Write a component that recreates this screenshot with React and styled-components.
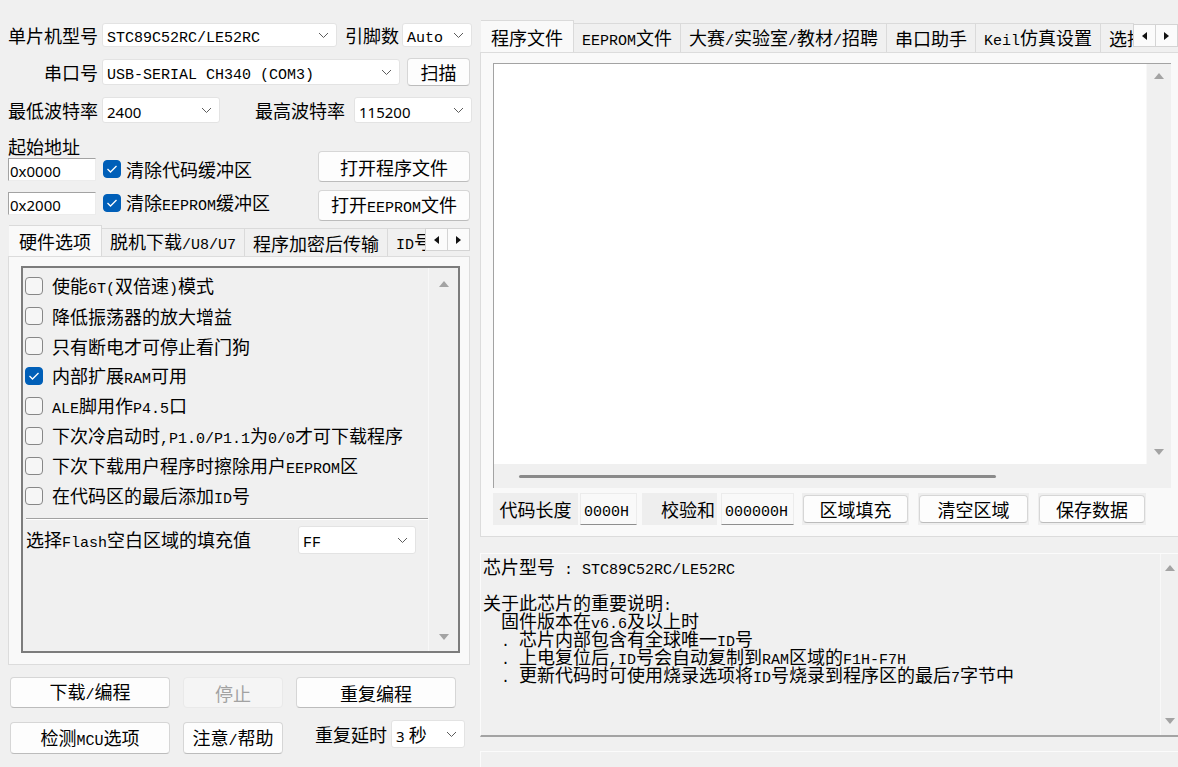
import React from 'react';
import styled, { createGlobalStyle, css } from 'styled-components';

const GlobalStyle = createGlobalStyle`
  html, body {
    margin: 0;
    padding: 0;
    background: #f0f0f0;
  }
  body {
    font-family: "Noto Sans CJK SC", "Noto Sans", sans-serif;
    font-size: 18px;
    color: #000;
  }
`;

// latin runs inside CJK labels are drawn in the narrow bitmap-like face
const Latin = styled.span`
  font-family: "Liberation Mono", "Noto Sans CJK SC", monospace;
  font-size: 15px;
`;

const Sans = styled.span`
  font-family: "Noto Sans", sans-serif;
  font-size: 15px;
`;

// one span, so a flex parent sees a single item and the runs share a baseline
const Mixed = ({ text }) => (
  <span>
    {text.split(/([ -~]+)/).map((part, i) => (i % 2 ? <Latin key={i}>{part}</Latin> : part))}
  </span>
);

const Window = styled.div`
  display: flex;
  width: 1178px;
  height: 767px;
  overflow: hidden;
  background: #f0f0f0;
`;

/* ---------- shared controls ---------- */

const Row = styled.div`
  display: flex;
  align-items: center;
  height: ${({ $h }) => $h}px;
  margin-top: ${({ $mt }) => $mt || 0}px;
`;

const Label = styled.div`
  flex: none;
  width: ${({ $w }) => $w}px;
  margin-left: ${({ $ml }) => $ml || 0}px;
  line-height: 1;
  white-space: nowrap;
  text-align: ${({ $right }) => ($right ? 'right' : 'left')};
  padding-right: ${({ $right }) => ($right ? 4 : 0)}px;
  box-sizing: border-box;
`;

const SelectBox = styled.div`
  flex: none;
  display: flex;
  align-items: center;
  justify-content: space-between;
  width: ${({ $w }) => $w}px;
  height: ${({ $h }) => $h || 24}px;
  box-sizing: border-box;
  padding: 0 7px 0 4px;
  background: #fff;
  border: 1px solid #e3e3e3;
  border-radius: 3px;
  line-height: 1;
  white-space: nowrap;
`;

const Chevron = () => (
  <svg width="11" height="7" viewBox="0 0 11 7">
    <polyline points="1,1 5.5,5.5 10,1" fill="none" stroke="#5c5c5c" strokeWidth="1" />
  </svg>
);

const Select = ({ w, h, children }) => (
  <SelectBox $w={w} $h={h}>
    <span>{children}</span>
    <Chevron />
  </SelectBox>
);

const Button = styled.div`
  flex: none;
  display: flex;
  align-items: center;
  justify-content: center;
  width: ${({ $w }) => ($w ? `${$w}px` : 'auto')};
  height: ${({ $h }) => ($h ? `${$h}px` : 'auto')};
  margin-left: ${({ $ml }) => $ml || 0}px;
  box-sizing: border-box;
  background: #fdfdfd;
  border: 1px solid #d6d6d6;
  border-bottom-color: #bcbcbc;
  border-radius: 4px;
  line-height: 1;
  white-space: nowrap;

  ${({ $disabled }) =>
    $disabled &&
    css`
      background: #f5f5f5;
      border-color: #e9e9e9;
      color: #a2a2a2;
    `}
`;

const CheckBox = styled.span`
  flex: none;
  display: inline-flex;
  align-items: center;
  justify-content: center;
  width: 18px;
  height: 18px;
  box-sizing: border-box;
  border-radius: 4px;
  ${({ $checked }) =>
    $checked
      ? css`
          background: #005fb8;
          border: 1px solid #005fb8;
        `
      : css`
          background: #f6f6f6;
          border: 1px solid #878787;
        `}
`;

const Check = ({ checked }) => (
  <CheckBox $checked={checked}>
    {checked && (
      <svg width="12" height="10" viewBox="0 0 12 10">
        <polyline points="1.5,5 4.5,8 10.5,2" fill="none" stroke="#fff" strokeWidth="1.3" />
      </svg>
    )}
  </CheckBox>
);

const ScrollArrow = ({ down }) => (
  <svg width="12" height="8" viewBox="0 0 12 8">
    <path d={down ? 'M1 1 H11 L6 7 Z' : 'M1 7 H11 L6 1 Z'} fill="#a3a3a3" />
  </svg>
);

/* ---------- tabs ---------- */

const TabStrip = styled.div`
  display: flex;
  align-items: flex-end;
  height: ${({ $h }) => $h}px;
  margin-left: 1px;
`;

const TabList = styled.div`
  flex: 1;
  min-width: 0;
  display: flex;
  align-items: flex-end;
  height: 100%;
  overflow: hidden;
`;

const Tab = styled.div`
  flex: none;
  display: flex;
  align-items: center;
  height: ${({ $active, $h }) => ($active ? $h : $h - 3)}px;
  box-sizing: border-box;
  padding: 0 ${({ $active }) => ($active ? 10 : 8)}px;
  margin-left: -1px;
  border: 1px solid #dadada;
  border-bottom: none;
  background: ${({ $active }) => ($active ? '#f9f9f9' : '#f0f0f0')};
  line-height: 1;
  white-space: nowrap;

  :first-child {
    margin-left: 0;
  }
`;

const TabArrows = styled.div`
  flex: none;
  display: flex;
  align-self: flex-start;
  margin-top: ${({ $mt }) => $mt}px;
`;

const TabArrow = styled.div`
  display: flex;
  align-items: center;
  justify-content: center;
  width: ${({ $s }) => $s}px;
  height: ${({ $s }) => $s}px;
  box-sizing: border-box;
  background: #fbfbfb;
  border: 1px solid #d4d4d4;
  margin-left: -1px;
`;

const ArrowPair = ({ size, mt }) => (
  <TabArrows $mt={mt}>
    <TabArrow $s={size}>
      <svg width="5" height="8" viewBox="0 0 5 8">
        <path d="M5 0 V8 L0 4 Z" fill="#111" />
      </svg>
    </TabArrow>
    <TabArrow $s={size}>
      <svg width="5" height="8" viewBox="0 0 5 8">
        <path d="M0 0 V8 L5 4 Z" fill="#111" />
      </svg>
    </TabArrow>
  </TabArrows>
);

/* ---------- left pane ---------- */

const LeftPane = styled.div`
  flex: none;
  width: 478px;
  box-sizing: border-box;
  padding: 23px 6px 0 8px;
  display: flex;
  flex-direction: column;
`;

const AddrSection = styled.div`
  display: flex;
  justify-content: space-between;
  margin-top: 13px;
`;

const AddrColumn = styled.div`
  display: flex;
  flex-direction: column;
`;

const SmallLabel = styled.div`
  height: 20px;
  line-height: 20px;
`;

const AddrRow = styled.div`
  display: flex;
  align-items: center;
  height: 26px;
  margin-top: ${({ $mt }) => $mt || 0}px;
`;

const AddrInput = styled.div`
  flex: none;
  width: 88px;
  height: 23px;
  box-sizing: border-box;
  margin-right: 7px;
  padding-left: 1px;
  background: #fff;
  border-top: 1px solid #a3a3a3;
  border-left: 1px solid #a3a3a3;
  border-right: 1px solid #ececec;
  border-bottom: 1px solid #ececec;
  line-height: 21px;
`;

const CheckText = styled.span`
  margin-left: ${({ $ml }) => $ml || 5}px;
  line-height: 1;
  white-space: nowrap;
`;

const ButtonColumn = styled.div`
  display: flex;
  flex-direction: column;
  gap: 8px;
  padding-top: 15px;
  margin-right: 2px;
`;

const LeftTabs = styled.div`
  margin-top: 4px;
  width: 462px;
`;

const OptionsPanel = styled.div`
  height: 409px;
  box-sizing: border-box;
  padding: 9px 9px 11px 12px;
  background: #f9f9f9;
  border: 1px solid #dcdcdc;
  display: flex;
`;

const ListBox = styled.div`
  flex: 1;
  display: grid;
  grid-template-columns: 1fr 30px;
  border: 2px solid #7c7c7c;
  background: #f0f0f0;
`;

const ListContent = styled.div`
  padding: 3px 0 0 2px;
`;

const OptionRow = styled.div`
  display: flex;
  align-items: center;
  height: 30px;
`;

const Separator = styled.div`
  margin: 7px 0 0 1px;
  border-top: 1px solid #a2a2a2;
  border-bottom: 1px solid #fff;
`;

const FillRow = styled.div`
  display: flex;
  align-items: center;
  height: 40px;
  padding-left: 1px;
`;

const VScroll = styled.div`
  display: flex;
  flex-direction: column;
  justify-content: space-between;
  align-items: center;
  padding: ${({ $pad }) => $pad};
  border-left: 1px solid #f8f8f8;
  background: #f0f0f0;
`;

const ActionGrid = styled.div`
  display: grid;
  grid-template-columns: 160px 100px 170px;
  grid-template-rows: 31px 32px;
  column-gap: 13px;
  row-gap: 14px;
  margin: 12px 0 0 2px;
`;

const DelayCell = styled.div`
  display: flex;
  align-items: center;
  gap: 4px;
  height: 28px;
  margin-top: -2px;
  padding-left: 19px;
  line-height: 1;
  white-space: nowrap;
`;

/* ---------- right pane ---------- */

const RightPane = styled.div`
  flex: 1;
  min-width: 0;
  display: flex;
  flex-direction: column;
  padding: 20px 0 0 2px;
`;

const FilePanel = styled.div`
  height: 485px;
  box-sizing: border-box;
  margin-right: -4px;
  padding: 10px 0 0 12px;
  background: #f9f9f9;
  border: 1px solid #dcdcdc;
`;

const Editor = styled.div`
  width: 678px;
  height: 425px;
  box-sizing: border-box;
  display: grid;
  grid-template-columns: 1fr 25px;
  grid-template-rows: 1fr 24px;
  border-top: 1px solid #a3a3a3;
  border-left: 1px solid #a3a3a3;
  background: #f0f0f0;
`;

const EditorText = styled.div`
  background: #fff;
`;

const HScroll = styled.div`
  display: flex;
  align-items: center;
  padding-left: 25px;
`;

const HThumb = styled.div`
  width: 477px;
  height: 3px;
  border-radius: 2px;
  background: #8a8a8a;
`;

const CodeRow = styled.div`
  display: flex;
  height: 32px;
  margin-top: 5px;
`;

const InfoCell = styled.div`
  flex: none;
  display: flex;
  align-items: center;
  justify-content: ${({ $align }) => $align || 'center'};
  width: ${({ $w }) => $w}px;
  margin-left: ${({ $ml }) => $ml || 0}px;
  box-sizing: border-box;
  padding: 0 2px;
  background: #eeeeee;
  line-height: 1;
  white-space: nowrap;
`;

const ValueField = styled.div`
  flex: none;
  display: flex;
  align-items: center;
  width: ${({ $w }) => $w}px;
  margin-left: ${({ $ml }) => $ml || 0}px;
  box-sizing: border-box;
  padding-left: 3px;
  background: #f9f9f9;
  border: 1px solid #ececec;
  border-bottom: 1px solid #8e8e8e;
  line-height: 1;
`;

const ButtonCell = styled.div`
  flex: none;
  display: flex;
  width: ${({ $w }) => $w}px;
  margin-left: ${({ $ml }) => $ml || 0}px;
  box-sizing: border-box;
  padding: 2px 1px;
  background: #eeeeee;

  & > * {
    flex: 1;
  }
`;

const InfoBox = styled.div`
  margin-top: 16px;
  height: 184px;
  box-sizing: border-box;
  display: grid;
  grid-template-columns: 1fr 18px;
  border-top: 1px solid #fbfbfb;
  border-left: 1px solid #fbfbfb;
  border-bottom: 2px solid #a3a3a3;
`;

const InfoText = styled.div`
  padding: 3px 0 0 2px;
`;

const InfoLine = styled.div`
  height: 18px;
  line-height: 18px;
  white-space: pre;
`;

const LowerBox = styled.div`
  flex: 1;
  margin-top: 14px;
  border-top: 1px solid #fbfbfb;
  border-left: 1px solid #fbfbfb;
`;

const options = [
  { text: '使能6T(双倍速)模式' },
  { text: '降低振荡器的放大增益' },
  { text: '只有断电才可停止看门狗' },
  { text: '内部扩展RAM可用', checked: true },
  { text: 'ALE脚用作P4.5口' },
  { text: '下次冷启动时,P1.0/P1.1为0/0才可下载程序' },
  { text: '下次下载用户程序时擦除用户EEPROM区' },
  { text: '在代码区的最后添加ID号' },
];

const infoLines = [
  '芯片型号 : STC89C52RC/LE52RC',
  '',
  '关于此芯片的重要说明:',
  '  固件版本在v6.6及以上时',
  '  . 芯片内部包含有全球唯一ID号',
  '  . 上电复位后,ID号会自动复制到RAM区域的F1H-F7H',
  '  . 更新代码时可使用烧录选项将ID号烧录到程序区的最后7字节中',
];

const leftTabs = ['硬件选项', '脱机下载/U8/U7', '程序加密后传输', 'ID号设置'];
const rightTabs = ['程序文件', 'EEPROM文件', '大赛/实验室/教材/招聘', '串口助手', 'Keil仿真设置', '选择型号'];

export default function App() {
  return (
    <>
      <GlobalStyle />
      <Window>
        <LeftPane>
          <Row $h={24}>
            <Label $w={94}>单片机型号</Label>
            <Select w={235}>
              <Mixed text="STC89C52RC/LE52RC" />
            </Select>
            <Label $w={57} $ml={8}>
              引脚数
            </Label>
            <Select w={70}>
              <Mixed text="Auto" />
            </Select>
          </Row>
          <Row $h={28} $mt={11}>
            <Label $w={94} $right>
              串口号
            </Label>
            <Select w={298} h={26}>
              <Mixed text="USB-SERIAL CH340 (COM3)" />
            </Select>
            <Button $w={63} $h={28} $ml={7}>
              扫描
            </Button>
          </Row>
          <Row $h={26} $mt={11}>
            <Label $w={94}>最低波特率</Label>
            <Select w={118} h={26}>
              <Sans>2400</Sans>
            </Select>
            <Label $w={99} $ml={35}>
              最高波特率
            </Label>
            <Select w={118} h={26}>
              <Sans>115200</Sans>
            </Select>
          </Row>

          <AddrSection>
            <AddrColumn>
              <SmallLabel>起始地址</SmallLabel>
              <AddrRow>
                <AddrInput>
                  <Sans>0x0000</Sans>
                </AddrInput>
                <Check checked />
                <CheckText>清除代码缓冲区</CheckText>
              </AddrRow>
              <AddrRow $mt={8}>
                <AddrInput>
                  <Sans>0x2000</Sans>
                </AddrInput>
                <Check checked />
                <CheckText>
                  <Mixed text="清除EEPROM缓冲区" />
                </CheckText>
              </AddrRow>
            </AddrColumn>
            <ButtonColumn>
              <Button $w={152} $h={31}>
                打开程序文件
              </Button>
              <Button $w={152} $h={31}>
                <Mixed text="打开EEPROM文件" />
              </Button>
            </ButtonColumn>
          </AddrSection>

          <LeftTabs>
            <TabStrip $h={31}>
              <TabList>
                {leftTabs.map((t, i) => (
                  <Tab key={t} $h={31} $active={i === 0}>
                    <Mixed text={t} />
                  </Tab>
                ))}
              </TabList>
              <ArrowPair size={23} mt={3} />
            </TabStrip>
            <OptionsPanel>
              <ListBox>
                <ListContent>
                  {options.map((o) => (
                    <OptionRow key={o.text}>
                      <Check checked={o.checked} />
                      <CheckText $ml={9}>
                        <Mixed text={o.text} />
                      </CheckText>
                    </OptionRow>
                  ))}
                  <Separator />
                  <FillRow>
                    <Label $w={272}>
                      <Mixed text="选择Flash空白区域的填充值" />
                    </Label>
                    <Select w={118} h={28}>
                      <Mixed text="FF" />
                    </Select>
                  </FillRow>
                </ListContent>
                <VScroll $pad="12px 0 10px">
                  <ScrollArrow />
                  <ScrollArrow down />
                </VScroll>
              </ListBox>
            </OptionsPanel>
          </LeftTabs>

          <ActionGrid>
            <Button>
              <Mixed text="下载/编程" />
            </Button>
            <Button $disabled>停止</Button>
            <Button $w={160}>重复编程</Button>
            <Button>
              <Mixed text="检测MCU选项" />
            </Button>
            <Button>
              <Mixed text="注意/帮助" />
            </Button>
            <DelayCell>
              重复延时
              <Select w={74} h={28}>
                <Sans>3</Sans> 秒
              </Select>
            </DelayCell>
          </ActionGrid>
        </LeftPane>

        <RightPane>
          <TabStrip $h={32}>
            <TabList>
              {rightTabs.map((t, i) => (
                <Tab key={t} $h={32} $active={i === 0}>
                  <Mixed text={t} />
                </Tab>
              ))}
            </TabList>
            <ArrowPair size={23} mt={4} />
          </TabStrip>
          <FilePanel>
            <Editor>
              <EditorText />
              <VScroll $pad="8px 0 8px">
                <ScrollArrow />
                <ScrollArrow down />
              </VScroll>
              <HScroll>
                <HThumb />
              </HScroll>
              <div />
            </Editor>
            <CodeRow>
              <InfoCell $w={85}>代码长度</InfoCell>
              <ValueField $w={57} $ml={2}>
                <Mixed text="0000H" />
              </ValueField>
              <InfoCell $w={75} $ml={5} $align="flex-end">
                校验和
              </InfoCell>
              <ValueField $w={73} $ml={4}>
                <Mixed text="000000H" />
              </ValueField>
              <ButtonCell $w={107} $ml={8}>
                <Button>区域填充</Button>
              </ButtonCell>
              <ButtonCell $w={111} $ml={9}>
                <Button>清空区域</Button>
              </ButtonCell>
              <ButtonCell $w={108} $ml={9}>
                <Button>保存数据</Button>
              </ButtonCell>
            </CodeRow>
          </FilePanel>

          <InfoBox>
            <InfoText>
              {infoLines.map((line, i) => (
                <InfoLine key={i}>
                  <Mixed text={line} />
                </InfoLine>
              ))}
            </InfoText>
            <VScroll $pad="10px 0 10px">
              <ScrollArrow />
              <ScrollArrow down />
            </VScroll>
          </InfoBox>
          <LowerBox />
        </RightPane>
      </Window>
    </>
  );
}
